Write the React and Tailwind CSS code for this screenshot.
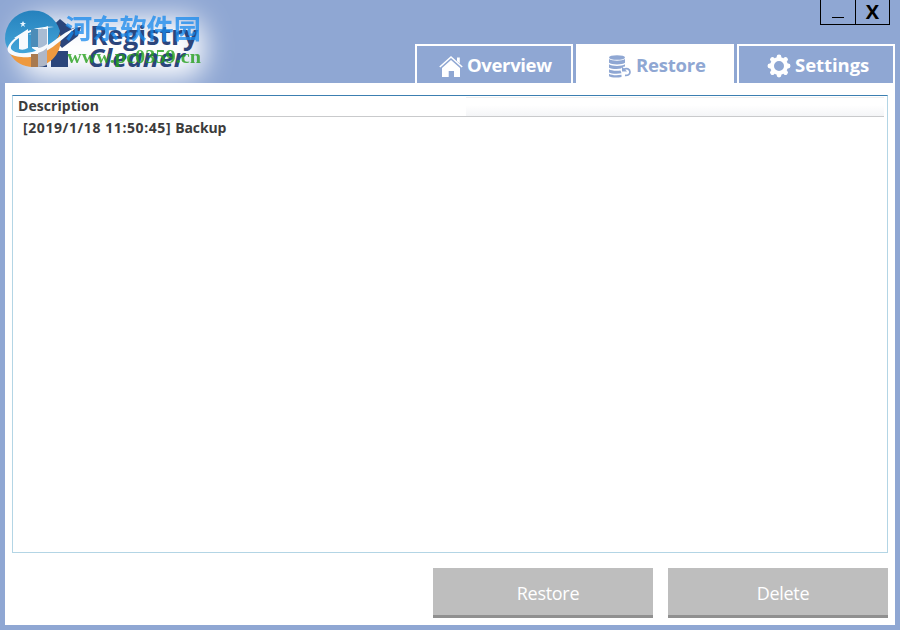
import { useState } from "react";

function HomeIcon() {
  return (
    <svg width="24" height="22" viewBox="0 0 24 22" fill="currentColor">
      <path d="M18 2.600h2.800v6L18 6.200z" />
      <path d="M.8 12 12 2l11.200 10" fill="none" stroke="currentColor" strokeWidth="1.600" />
      <path d="M12 5 21 13V22h-6v-6H9.700v6H3v-9z" />
    </svg>
  );
}

function DatabaseIcon() {
  return (
    <svg width="24" height="23" viewBox="0 0 24 23" fill="currentColor">
      <ellipse cx="9" cy="2.500" rx="8" ry="2.300" />
      <path d="M1 4.100c3 2.300 13 2.300 16 0v3.700c-2.500 2.300-13.500 2.300-16 0z" />
      <path d="M1 9.200c3 2.300 13 2.300 16 0v2.200c-2.500 0-3.500 1.200-4 2.200-4 .7-10.200.3-12-.9z" />
      <path d="M1 14.300c2 1.400 7 1.900 11.500 1.200l1 2.700c-4 .8-10.500.5-12.500-.8z" />
      <path d="M1 18.700c2.500 1.500 7 1.900 12.500 1.100V22c-4 1-10.500.8-12.500-.7z" />
      <path d="M16 14.300c2.500-1.600 6-.4 6 2.700 0 2.700-2.300 3.700-5 3.400" fill="none" stroke="currentColor" strokeWidth="1.700" />
      <path d="M14 11.500v5h5z" />
    </svg>
  );
}

function GearIcon() {
  return (
    <svg width="24" height="24" viewBox="0 0 24 24" fill="none" stroke="currentColor">
      <circle cx="12" cy="12" r="7" strokeWidth="4" />
      <g strokeWidth="4.800" strokeLinecap="round">
        <path d="M12 2.900v1M12 20.100v1M2.900 12h1M20.100 12h1M5.500 5.500l.6.600M17.900 17.900l.6.600M18.500 5.500l-.6.600M6.100 17.900l-.6.600" />
      </g>
    </svg>
  );
}

function Logo() {
  return (
    <svg width="240" height="83" viewBox="0 0 240 83" className="shrink-0">
      <defs>
        <filter id="soft" x="-30%" y="-80%" width="160%" height="260%">
          <feGaussianBlur stdDeviation="14" />
        </filter>
        <linearGradient id="sky" x1="0" y1="0" x2="0" y2="1">
          <stop offset="0" stopColor="#2581bd" />
          <stop offset="1" stopColor="#43a5d9" />
        </linearGradient>
      </defs>
      <rect x="20" y="18" width="184" height="60" rx="20" fill="#fff" filter="url(#soft)" />

      {/* house and blocks of the registry logo */}
      <g fill="#2b457b">
        <path d="M60 19 73 30 61 41 48 30z" />
        <path d="M73 28l8-1-3 9-16 12-5-6z" />
        <path d="M51 51h17v16H51zM31 51h16v16H31z" />
      </g>

      {/* two-tone globe */}
      <path d="M5 39a28 28 0 0 1 55-8C58 42 47 51 34 53 21 55 11 52 7 47q-2-4-2-8z" fill="url(#sky)" />
      <path d="M10 54c19 8 40-1 50-20 4 18-10 33-27 33-10 0-18-5-23-13z" fill="#ee993f" />
      <path d="M54 27C36 25 13 35 8 47 5 55 18 58 30 57 46 55 59 42 77 27 66 31 57 39 48 45 36 53 19 56 12 50 6 44 27 29 54 27z" fill="#f7fafd" />
      <path d="M14 38 28 29v19q-5 3-9 1V38z" fill="#f7fafd" />
      <path d="M28 35 48 26v20l-10 6-6-4V34z" fill="#f7fafd" />
      <path d="M31 29h7v18h-7z" fill="#4c8cb8" />
      <path d="M38 29h9v15q-5 4-9 4z" fill="#a9bcd3" />
      <path d="M31 54h7v13h-7z" fill="#a87a50" />
      <path d="M38 53q5-1 9-5v17q-4 2-9 2z" fill="#afb7c7" />
      <path d="m23 21 1 2h2l-2 1.500 1 2.500-2-1.500-2 1.500.7-2.500-2-1.500H22z" fill="#e9f6ff" />

      <text x="90" y="45" textLength="108" lengthAdjust="spacingAndGlyphs" fill="#2b457b" className="font-['Open_Sans',sans-serif] text-[27px] font-bold">Registry</text>
      <text x="88" y="67" textLength="97" lengthAdjust="spacingAndGlyphs" fill="#2b457b" className="font-['Open_Sans',sans-serif] text-[25px] font-bold italic">Cleaner</text>
      <text x="65" y="39" textLength="136" lengthAdjust="spacingAndGlyphs" fill="#1689ed" opacity=".75" className="font-['Noto_Sans_CJK_SC',sans-serif] text-[27px] font-bold">河东软件园</text>
      <text x="67" y="63" textLength="134" lengthAdjust="spacingAndGlyphs" fill="#25a01c" opacity=".8" className="font-['Liberation_Serif',serif] text-[19px] font-bold">www.pc0359.cn</text>
    </svg>
  );
}

const tabs = [
  { label: "Overview", icon: HomeIcon, gap: "gap-1", text: "tracking-[-0.36px]", pad: "pl-[22px]" },
  { label: "Restore", icon: DatabaseIcon, gap: "gap-1", text: "tracking-[-0.2px]", pad: "pl-[30px]" },
  { label: "Settings", icon: GearIcon, gap: "gap-1", text: "tracking-[-0.05px]", pad: "pl-[28px]" },
];

const backups = [{ date: "[2019/1/18 11:50:45]", name: "Backup" }];

export default function App() {
  const [active, setActive] = useState("Restore");

  return (
    <div className="flex h-[630px] w-[900px] flex-col overflow-hidden bg-[#8fa7d3] font-['Open_Sans','Noto_Sans',sans-serif]">
      <header className="flex h-[83px] shrink-0 justify-between pr-[5px]">
        <Logo />
        <div className="flex flex-col items-end justify-between">
          <div className="mr-[5px] flex">
            <button aria-label="Minimize" className="flex h-[25px] w-9 items-start justify-center border border-t-0 border-black pt-[17px]">
              <span className="block h-px w-3 bg-black" />
            </button>
            <button aria-label="Close" className="-ml-px flex h-[25px] w-[35px] items-center justify-center border border-t-0 border-black text-xl leading-6 font-bold">X</button>
          </div>
          <nav className="flex gap-[3px]">
            {tabs.map(({ label, icon: Icon, gap, text, pad }) => (
              <button
                key={label}
                onClick={() => setActive(label)}
                className={`flex h-[39px] w-[158px] items-center border-2 border-b-0 border-white pt-[3px] ${pad} ${gap} ${active === label ? "bg-white text-[#8fa7d3]" : "text-white"}`}
              >
                <Icon />
                <span className={`${text} -mt-0.5 whitespace-nowrap text-[18.5px] leading-6 font-bold`}>{label}</span>
              </button>
            ))}
          </nav>
        </div>
      </header>

      <main className="mx-[5px] mb-[5px] flex flex-1 flex-col bg-white px-[7px] pt-3 pb-[7px]">
        <section className="h-[458px] border border-[#b3d5e5] border-t-[#3c7fb1] px-[3px] text-sm font-bold text-[#3c3c3c]">
          <div className="flex h-[21px] border-b border-[#c9cacc]">
            <div className="w-[450px] pl-0.5 leading-[19px] tracking-[0.05px]">Description</div>
            <div className="mt-px flex-1 border-t border-[#f0f0f0] bg-linear-to-b from-white from-40% to-[#f4f5f7]" />
          </div>
          {backups.map(({ date, name }) => (
            <div key={date} className="flex gap-1 pl-[7px] leading-[22px]">
              <span className="tracking-[0.58px]">{date}</span>
              <span className="tracking-[-0.1px]">{name}</span>
            </div>
          ))}
        </section>

        <footer className="mt-[15px] flex justify-end gap-[15px]">
          {["Restore", "Delete"].map((label) => (
            <button key={label} className="h-[50px] w-[220px] border-b-3 border-[#909090] bg-[#bebebe] pt-1 pl-[10px] text-[18px] tracking-[-0.3px] text-white">{label}</button>
          ))}
        </footer>
      </main>
    </div>
  );
}
